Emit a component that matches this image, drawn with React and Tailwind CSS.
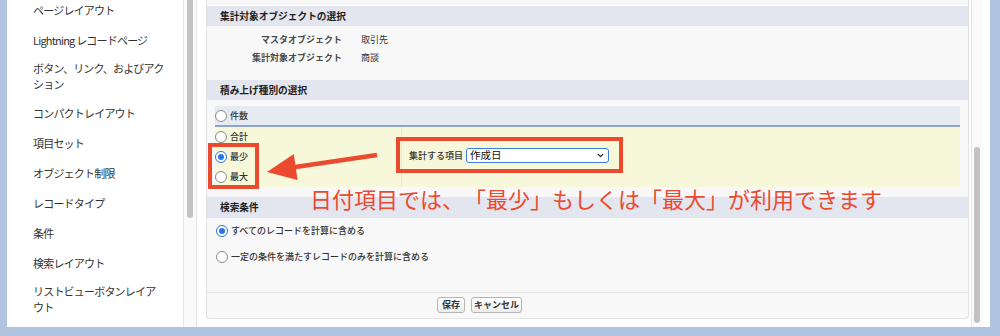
import React from 'react';
import { ChevronDown } from 'lucide-react';

const sideItems = [
    ['ページレイアウト'],
    ['Lightning レコードページ'],
    ['ボタン、リンク、およびアク', 'ション'],
    ['コンパクトレイアウト'],
    ['項目セット'],
    ['オブジェクト制限'],
    ['レコードタイプ'],
    ['条件'],
    ['検索レイアウト'],
    ['リストビューボタンレイア', 'ウト'],
];

const Radio = ({ checked }) => (
    checked ? (
        <span className="w-[12px] h-[12px] rounded-full border-[1.5px] border-[#2a74e6] bg-white flex items-center justify-center shrink-0">
            <span className="w-[6px] h-[6px] rounded-full bg-[#2a74e6]" />
        </span>
    ) : (
        <span className="w-[12px] h-[12px] rounded-full border border-[#8a8a8a] bg-white shrink-0" />
    )
);

const SectionHeader = ({ children, h }) => (
    <div className={`${h} bg-[#e3e6ef] flex items-center pl-[13px] text-[9.7px] font-bold text-[#1e1e1e]`}>
        {children}
    </div>
);

const Button = ({ children, w }) => (
    <div className={`${w} h-[16px] flex items-center justify-center rounded-[3px] border border-[#b4b4b4] bg-gradient-to-b from-white to-[#ececec] text-[9px] font-bold text-[#333]`}>
        {children}
    </div>
);

const App = () => {
    return (
        <div className="relative w-[1000px] h-[336px] overflow-hidden bg-[#b0c4df] flex items-start font-['Noto_Sans_CJK_JP','Liberation_Sans',sans-serif] [text-spacing-trim:space-all]">
            {/* sidebar */}
            <div className="ml-[7px] w-[189px] h-[327px] bg-white flex overflow-hidden">
                <div className="flex-1 -mt-[5px] pl-[26px]">
                    {sideItems.map((lines, i) => (
                        <div key={i} className={`${lines.length > 1 ? 'py-[6px] leading-[15.5px]' : 'py-[7.5px] leading-[15px]'} text-[11px] tracking-[-0.8px] text-[#333]`}>
                            {lines.map((l, j) => <div key={j}>{l}</div>)}
                        </div>
                    ))}
                </div>
                <div className="w-[13px] h-full border-l border-[#e6e6e6] bg-[#fafafa] pl-[3px]">
                    <div className="w-[6px] h-[228px] -mt-[10px] rounded-full bg-[#c2c2c2]" />
                </div>
            </div>

            {/* main */}
            <div className="w-[794px] h-[327px] bg-white border-l border-[#e4e4e4] flex pl-[9px]">
                <div className="w-[763px] h-[319px] bg-[#f8f8f8] border-x border-b border-[#e2e2e2] rounded-b-[4px] text-[#333]">
                    <div className="h-[5px]" />
                    <div className="h-[1px] bg-white" />
                    <SectionHeader h="h-[20px]">集計対象オブジェクトの選択</SectionHeader>
                    <div className="h-[54px] pt-[5px] text-[9px]">
                        <div className="flex h-[18px] items-center">
                            <div className="w-[135px] text-right font-semibold text-[#4a4a4a]">マスタオブジェクト</div>
                            <div className="ml-[19px]">取引先</div>
                        </div>
                        <div className="flex h-[18px] items-center">
                            <div className="w-[135px] text-right font-semibold text-[#4a4a4a]">集計対象オブジェクト</div>
                            <div className="ml-[19px]">商談</div>
                        </div>
                    </div>
                    <SectionHeader h="h-[20px]">積み上げ種別の選択</SectionHeader>
                    <div className="h-[97px] pt-[6px] px-[8px]">
                        <div className="h-[19px] bg-[#e5ebf1] flex items-center gap-[3px] text-[9px] font-medium">
                            <Radio />
                            <span>件数</span>
                        </div>
                        <div className="h-[2px] bg-[#8fa3ca]" />
                        <div className="h-[60px] bg-[#f7f7d9] flex">
                            <div className="w-[187px] border-r border-[#e9e9c9] text-[9px] font-medium">
                                <div className="h-[20px] flex items-center gap-[3px]"><Radio /><span>合計</span></div>
                                <div className="h-[20px] flex items-center gap-[3px]"><Radio checked /><span>最少</span></div>
                                <div className="h-[20px] flex items-center gap-[3px]"><Radio /><span>最大</span></div>
                            </div>
                            <div className="flex items-start pt-[21px] pl-[7px]">
                                <span className="h-[15px] flex items-center text-[9px] font-medium mr-[3px]">集計する項目</span>
                                <div className="w-[143px] h-[15px] rounded-[3px] border-[1.5px] border-[#3b7de0] bg-white flex items-center justify-between pl-[3px] pr-[3px] text-[10.5px] text-[#111]">
                                    <span className="leading-none">作成日</span>
                                    <ChevronDown size={9} strokeWidth={3.5} color="#222" />
                                </div>
                            </div>
                        </div>
                    </div>
                    <SectionHeader h="h-[21px]">検索条件</SectionHeader>
                    <div className="h-[74px] pt-[4px] pl-[9px] text-[9px] font-medium">
                        <div className="h-[18px] flex items-center gap-[3px]"><Radio checked /><span>すべてのレコードを計算に含める</span></div>
                        <div className="h-[18px] mt-[8px] flex items-center gap-[3px]"><Radio /><span>一定の条件を満たすレコードのみを計算に含める</span></div>
                    </div>
                    <div className="h-[26px] border-t border-[#e2e2e2] flex items-start pt-[4px] pl-[230px] gap-[6px]">
                        <Button w="w-[28px]">保存</Button>
                        <Button w="w-[51px]">キャンセル</Button>
                    </div>
                </div>
                <div className="ml-[2px] w-[12px] h-full border-l border-[#e6e6e6] bg-[#fafafa] pl-[2px] pt-[147px]">
                    <div className="w-[6px] h-[176px] rounded-full bg-[#c2c2c2]" />
                </div>
            </div>

            {/* annotations */}
            <div className="absolute left-[208px] top-[143px] w-[51px] h-[46px] border-[4px] border-[#ec4a2f]" />
            <div className="absolute left-[396px] top-[137px] w-[227px] h-[36px] border-[4px] border-[#ec4a2f]" />
            <svg className="absolute left-[260px] top-[145px]" width="125" height="45" viewBox="260 145 125 45">
                <line x1="377" y1="155" x2="292" y2="167.5" stroke="#ec4a2f" strokeWidth="4.5" />
                <polygon points="267,172 293.8,154 297.6,180" fill="#ec4a2f" />
            </svg>
            <div className="absolute left-[310px] top-[187px] text-[22px] leading-[22px] text-[#ec4a2f] whitespace-nowrap">
                日付項目では、「最少」もしくは「最大」が利用できます
            </div>
        </div>
    );
};

export default App;
